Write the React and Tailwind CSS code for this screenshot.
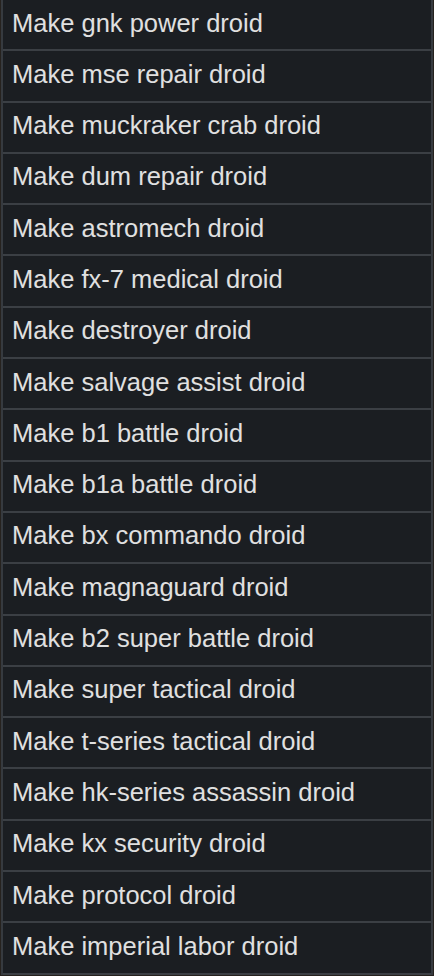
import React from 'react';

const droids = [
  'gnk power droid',
  'mse repair droid',
  'muckraker crab droid',
  'dum repair droid',
  'astromech droid',
  'fx-7 medical droid',
  'destroyer droid',
  'salvage assist droid',
  'b1 battle droid',
  'b1a battle droid',
  'bx commando droid',
  'magnaguard droid',
  'b2 super battle droid',
  'super tactical droid',
  't-series tactical droid',
  'hk-series assassin droid',
  'kx security droid',
  'protocol droid',
  'imperial labor droid',
];

const App = () => {
  return (
    <div className="h-[976px] w-[434px] overflow-hidden bg-[#26221e]">
      <div className="mx-[1px] border-x-2 border-[#363a3f] bg-[#1b1e22]">
        {droids.map(name => (
          <button
            key={name}
            className="flex h-[51.3px] w-full items-center border-b-2 border-[#3b3f44] pb-[4px] pl-[9px] text-left text-[25.5px] text-[#e0e0e0]"
            style={{ fontFamily: '"Liberation Sans", Arial, sans-serif' }}
          >
            Make {name}
          </button>
        ))}
      </div>
    </div>
  );
};

export default App;
